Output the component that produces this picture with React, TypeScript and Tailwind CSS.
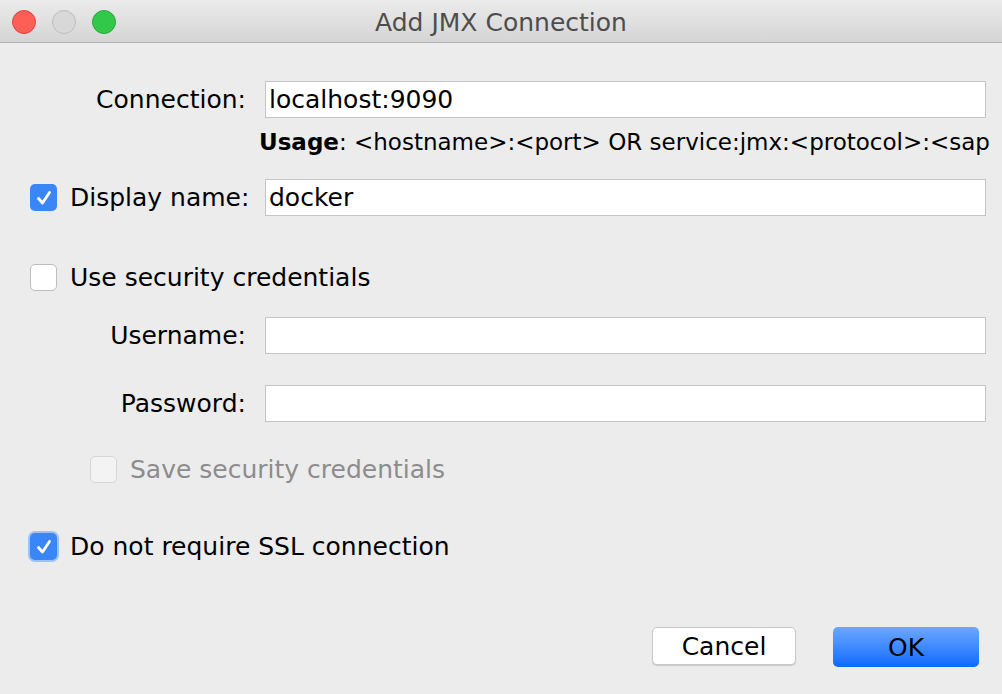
import React from "react";

const font = { fontFamily: '"DejaVu Sans", "Liberation Sans", sans-serif' };

function Check({ checked, disabled, glow }: { checked?: boolean; disabled?: boolean; glow?: boolean }) {
  if (checked) {
    return (
      <div
        className={
          "w-[27px] h-[27px] rounded-[5px] bg-[#3b86f7] flex items-center justify-center shrink-0 " +
          (glow ? "shadow-[0_0_0_2px_#9cc2f9]" : "")
        }
      >
        <svg width="22" height="22" viewBox="0 0 22 22">
          <path d="M5.5 11.5 L9.5 16 L16.5 5.5" fill="none" stroke="#fff" strokeWidth="2.8" strokeLinecap="round" strokeLinejoin="round" />
        </svg>
      </div>
    );
  }
  return (
    <div
      className={
        "w-[27px] h-[27px] rounded-[5px] border shrink-0 " +
        (disabled ? "bg-[#f3f3f3] border-[#d6d6d6]" : "bg-white border-[#bdbdbd]")
      }
    />
  );
}

function Field({ value }: { value?: string }) {
  return (
    <div className="h-[37px] bg-white border border-[#c4c4c4] flex items-center pl-[3px] text-[25px] text-black leading-none">
      {value}
    </div>
  );
}

export default function App() {
  return (
    <div className="w-[1002px] h-[694px] bg-[#ececec] flex flex-col overflow-hidden" style={font}>
      <div className="h-[43px] shrink-0 bg-gradient-to-b from-[#ebebeb] to-[#d5d5d5] border-b border-[#b3b3b3] relative flex items-center justify-center">
        <div className="absolute left-[12px] top-[10px] flex gap-[16px]">
          <div className="w-[24px] h-[24px] rounded-full bg-[#fd5f57] border border-[#e0443e]" />
          <div className="w-[24px] h-[24px] rounded-full bg-[#d8d8d8] border border-[#bdbdbd]" />
          <div className="w-[24px] h-[24px] rounded-full bg-[#34c84a] border border-[#25a93a]" />
        </div>
        <span className="text-[25px] text-[#4d4d4d] leading-none mt-[3px]">Add JMX Connection</span>
      </div>

      <div className="flex flex-col pr-[16px] text-black text-[25px] whitespace-nowrap">
        <div className="grid grid-cols-[246px_1fr] gap-x-[19px] mt-[38px] items-center">
          <div className="text-right leading-none">Connection:</div>
          <Field value="localhost:9090" />
        </div>
        <div className="pl-[259px] mt-[10px] mr-[-16px] text-[23px] leading-[28px] whitespace-nowrap">
          <span className="font-bold">Usage</span>: &lt;hostname&gt;:&lt;port&gt; OR service:jmx:&lt;protocol&gt;:&lt;sap
        </div>
        <div className="grid grid-cols-[246px_1fr] gap-x-[19px] mt-[23px] items-center">
          <div className="flex items-center pl-[30px] gap-[13px] leading-none">
            <Check checked />
            <span>Display name:</span>
          </div>
          <Field value="docker" />
        </div>
        <div className="flex items-center pl-[30px] gap-[13px] mt-[48px] leading-none">
          <Check />
          <span>Use security credentials</span>
        </div>
        <div className="grid grid-cols-[246px_1fr] gap-x-[19px] mt-[26px] items-center">
          <div className="text-right leading-none">Username:</div>
          <Field />
        </div>
        <div className="grid grid-cols-[246px_1fr] gap-x-[19px] mt-[31px] items-center">
          <div className="text-right leading-none">Password:</div>
          <Field />
        </div>
        <div className="flex items-center pl-[90px] gap-[13px] mt-[34px] leading-none text-[#8c8c8c]">
          <Check disabled />
          <span>Save security credentials</span>
        </div>
        <div className="flex items-center pl-[30px] gap-[13px] mt-[50px] leading-none">
          <Check checked glow />
          <span>Do not require SSL connection</span>
        </div>
        <div className="flex justify-end gap-[37px] mt-[67px] pr-[7px]">
          <div className="w-[144px] h-[38px] bg-white border border-[#c8c8c8] rounded-[5px] shadow-[0_1px_1px_rgba(0,0,0,0.15)] flex items-center justify-center text-[25px] leading-none">
            Cancel
          </div>
          <div className="w-[146px] h-[40px] rounded-[5px] bg-gradient-to-b from-[#6aa8ff] to-[#0a68ff] flex items-center justify-center text-[25px] leading-none">
            OK
          </div>
        </div>
      </div>
    </div>
  );
}
